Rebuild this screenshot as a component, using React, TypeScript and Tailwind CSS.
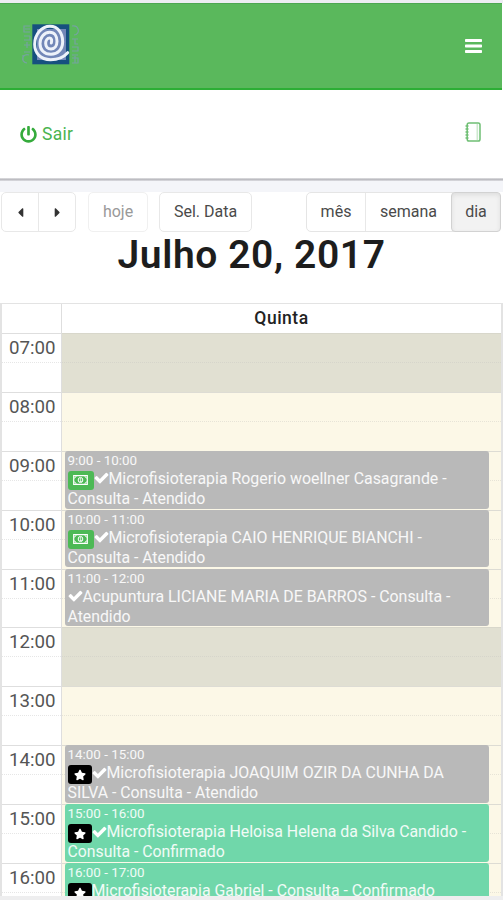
import React from "react";
import { FaCaretLeft, FaCaretRight, FaPowerOff, FaStar } from "react-icons/fa";

type Visit = {
  time: string;
  badge?: "money" | "star";
  check?: boolean;
  lines: string[];
  confirmed?: boolean;
};

type Hour = { label: string; closed?: boolean; visit?: Visit };

const hours: Hour[] = [
  { label: "07:00", closed: true },
  { label: "08:00" },
  {
    label: "09:00",
    visit: { time: "9:00 - 10:00", badge: "money", check: true, lines: ["Microfisioterapia Rogerio woellner Casagrande -", "Consulta - Atendido"] },
  },
  {
    label: "10:00",
    visit: { time: "10:00 - 11:00", badge: "money", check: true, lines: ["Microfisioterapia CAIO HENRIQUE BIANCHI -", "Consulta - Atendido"] },
  },
  {
    label: "11:00",
    visit: { time: "11:00 - 12:00", check: true, lines: ["Acupuntura LICIANE MARIA DE BARROS - Consulta -", "Atendido"] },
  },
  { label: "12:00", closed: true },
  { label: "13:00" },
  {
    label: "14:00",
    visit: { time: "14:00 - 15:00", badge: "star", check: true, lines: ["Microfisioterapia JOAQUIM OZIR DA CUNHA DA", "SILVA - Consulta - Atendido"] },
  },
  {
    label: "15:00",
    visit: { time: "15:00 - 16:00", badge: "star", check: true, confirmed: true, lines: ["Microfisioterapia Heloisa Helena da Silva Candido -", "Consulta - Confirmado"] },
  },
  {
    label: "16:00",
    visit: { time: "16:00 - 17:00", badge: "star", confirmed: true, lines: ["Microfisioterapia Gabriel - Consulta - Confirmado"] },
  },
];

function Logo() {
  return (
    <svg width="60" height="42" viewBox="0 0 60 42" fill="none">
      <g stroke="#7c9fb0" strokeWidth="1.2" opacity="0.8">
        <path d="M10 3H4v6h6M5 6h5M4 13h6M4 17h6v-4M4 22h6M7 19v6M4 29h6M9 32c-7-2-9 7-2 8M3 32v5" />
        <path d="M52 3c7-1 9 8 2 9M52 16h6M55 16v5h3M52 24h6v4h-6M52 32h6M52 35h6v5h-6M55 33v7" />
      </g>
      <rect x="12.300" y="1.300" width="37" height="40" fill="#16507f" />
      <rect x="17" y="6" width="29" height="31" fill="#7287b8" />
      <path
        transform="scale(.3333) translate(-60 -66)"
        d="M203 155C188 172 170 176 152 176C120 176 104 155 104 130C104 100 125 76 150 76C175 76 188 98 188 122C188 146 172 160 153 160C132 160 120 146 120 128C120 110 132 94 149 94C164 94 171 106 171 121C171 134 164 144 153 144C143 144 137 137 137 127C137 118 142 111 149 111C155 111 156 118 154 126"
        stroke="#edf2fa"
        strokeWidth="9"
        strokeLinecap="round"
      />
    </svg>
  );
}

function Menu() {
  return (
    <svg width="17" height="16" viewBox="0 0 17 16" fill="white">
      <rect y="1" width="17" height="3" rx=".7" />
      <rect y="6.500" width="17" height="3" rx=".7" />
      <rect y="12" width="17" height="3" rx=".7" />
    </svg>
  );
}

function Check() {
  return (
    <svg className="shrink-0" width="15" height="15" viewBox="60 130 1672 1672" fill="white">
      <path d="M1671 566q0 40-28 68l-724 724-136 136q-28 28-68 28t-68-28l-136-136-362-362q-28-28-28-68t28-68l136-136q28-28 68-28t68 28l294 295 656-657q28-28 68-28t68 28l136 136q28 28 28 68z" />
    </svg>
  );
}

function Notebook() {
  return (
    <svg width="17" height="20" viewBox="0 0 17 20" fill="none" stroke="#6fbf74">
      <rect x="2.200" y="1" width="12.800" height="18" rx="1.800" strokeWidth="1.500" />
      <path d="M12.300 2v16" strokeWidth="1.600" opacity=".35" />
      <path d="M.5 4h3M.5 7h3M.5 10h3M.5 13h3M.5 16h3" strokeWidth="1.300" />
    </svg>
  );
}

function Money() {
  return (
    <svg width="15" height="10" viewBox="0 0 15 10" fill="none" stroke="white">
      <path d="M.7.7h13.600v8.600H.7z" strokeWidth="1.200" />
      <path d="M1 3c1.200 0 2-.8 2-2M14 3c-1.200 0-2-.8-2-2M1 7c1.200 0 2 .8 2 2M14 7c-1.200 0-2 .8-2 2" />
      <ellipse cx="7.500" cy="5" rx="2.300" ry="2.600" />
      <path d="M6.700 4l1-.6v3M6.700 6.500h2" strokeWidth=".8" />
    </svg>
  );
}

function Event({ visit }: { visit: Visit }) {
  return (
    <div
      className={`-mt-px ml-[3px] mr-[12px] h-[57.800px] rounded-[3px] pl-[2.500px] pt-[1px] text-white/90 ${
        visit.confirmed ? "bg-[#70d7aa]" : "bg-[#b9b9b9]"
      }`}
    >
      <div className="h-[17px] text-[13.400px] leading-[17px]">{visit.time}</div>
      <div className="flex h-[20px] items-center whitespace-nowrap text-[15.900px] leading-[20px]">
        {visit.badge === "money" && (
          <span className="mt-[3px] flex h-[19px] w-[26px] shrink-0 items-center justify-center rounded-[3px] bg-[#4db955]">
            <Money />
          </span>
        )}
        {visit.badge === "star" && (
          <span className="mt-[3px] flex h-[19px] w-[24px] shrink-0 items-center justify-center rounded-[3px] bg-black">
            <FaStar className="size-[12px] text-white" />
          </span>
        )}
        {visit.check && <Check />}
        <span>{visit.lines[0]}</span>
      </div>
      {visit.lines[1] && <div className="whitespace-nowrap text-[15.800px] leading-[20px]">{visit.lines[1]}</div>}
    </div>
  );
}

export default function App() {
  const viewButton = "flex h-full items-center justify-center border-[#e8e8e8]";
  return (
    <div className="flex h-[900px] w-[503px] flex-col overflow-hidden bg-white font-['Roboto','Liberation_Sans',sans-serif] text-[#4a4a4a]">
      <div className="h-[3px] shrink-0 bg-[#ededf3]" />
      <header className="mr-px flex h-[87px] shrink-0 items-center justify-between border-t border-b-2 border-t-[#4da752] border-b-[#2cae35] bg-[#5ab85c] pl-[20px] pr-[20px]">
        <div className="mb-[5px]"><Logo /></div>
        <Menu />
      </header>
      <nav className="mr-px flex h-[88px] shrink-0 items-center justify-between pl-[20px] pr-[20px] text-[#4ab44f]">
        <div className="flex items-center gap-[5px] text-[17.500px] tracking-[0.300px]">
          <FaPowerOff className="size-[17px] text-[#35ab3c]" />
          <span>Sair</span>
        </div>
        <span className="mb-[4px]"><Notebook /></span>
      </nav>
      <div className="h-[3px] shrink-0 bg-linear-to-b from-[#e0e0e3] via-[#bdbdc2] to-[#dedee3]" />
      <div className="h-[11px] shrink-0 bg-[#f4f5f9]" />
      <div className="flex h-[40px] shrink-0 pl-px pr-[2px] text-[16px]">
        <div className="flex w-[75px] rounded-[5px] border border-[#e8e8e8] text-[#333]">
          <div className={`${viewButton} w-[37px] border-r`}><FaCaretLeft className="size-[15px]" /></div>
          <div className={`${viewButton} flex-1`}><FaCaretRight className="size-[15px]" /></div>
        </div>
        <div className="ml-[12px] flex w-[60px] items-center justify-center rounded-[5px] border border-[#f0f0f0] text-[#999]">hoje</div>
        <div className="ml-[11px] flex w-[93px] items-center justify-center rounded-[5px] border border-[#e8e8e8]">Sel. Data</div>
        <div className="ml-auto flex w-[195px] rounded-[5px] border border-[#e5e5e5]">
          <div className={`${viewButton} w-[59px] border-r`}>mês</div>
          <div className={`${viewButton} flex-1`}>semana</div>
          <div className="-my-px -mr-px flex w-[50px] items-center justify-center rounded-[4px] border border-[#d2d2d2] bg-[#f2f2f2] shadow-[inset_0_2px_4px_#dedede]">dia</div>
        </div>
      </div>
      <h1 className="h-[71px] shrink-0 text-center text-[39px] font-semibold leading-[46px] tracking-[0.600px] text-[#1d1d1d]">Julho 20, 2017</h1>
      <div className="flex h-[30px] shrink-0 border-l-2 border-r-2 border-t border-[#e3e3e3] text-[17.500px] font-medium text-[#222]">
        <div className="w-[60px] border-r border-[#dedede]" />
        <div className="flex flex-1 items-center justify-center tracking-[0.500px]">Quinta</div>
      </div>
      <main className="h-[563px] shrink-0 overflow-hidden border-l-2 border-r-2 border-[#e3e3e3]">
        {hours.map((hour) => (
          <section key={hour.label} className="grid h-[58.900px] grid-cols-[60px_1fr]">
            <div className="flex flex-col border-r border-t border-[#dedede]">
              <div className="h-[29px] border-b border-dotted border-[#e6e6e6] pr-[5.500px] text-right text-[18.700px] leading-[29px] text-[#555]">{hour.label}</div>
            </div>
            <div className={`grid border-t ${hour.closed ? "border-[#d8d7cb] bg-[#e1e0d2]" : "border-[#dddcd4] bg-[#fcf8e7]"}`}>
              <div className={`col-start-1 row-start-1 h-[29px] border-b border-dotted ${hour.closed ? "border-[#d6d5cb]" : "border-[#e7e4d7]"}`} />
              {hour.visit && <div className="z-10 col-start-1 row-start-1"><Event visit={hour.visit} /></div>}
            </div>
          </section>
        ))}
      </main>
      <footer className="h-[4px] shrink-0 bg-[#eeeeef]" />
    </div>
  );
}
